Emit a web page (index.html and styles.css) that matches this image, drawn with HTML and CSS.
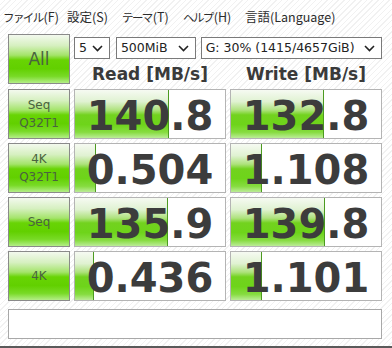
FILE: index.html
```html
<!DOCTYPE html>
<html lang="ja">
<head>
    <meta charset="UTF-8">
    <title>CrystalDiskMark</title>
    <link rel="stylesheet" href="styles.css">
</head>
<body>
    <div class="menu">
        <span class="menu-item file"><span class="kana">ファイル</span>(F)</span>
        <span class="menu-item settings">設定(S)</span>
        <span class="menu-item theme"><span class="kana">テーマ</span>(T)</span>
        <span class="menu-item help"><span class="kana">ヘルプ</span>(H)</span>
        <span class="menu-item">言語(Language)</span>
    </div>

    <div class="board">
        <div class="btn btn-all">All</div>
        <div class="head">
            <div class="selects">
                <div class="select sel-count">5<svg class="chev" width="11" height="7" viewBox="0 0 11 7"><polyline points="1,1 5.5,5.5 10,1" fill="none" stroke="#222" stroke-width="1.6"/></svg></div>
                <div class="select sel-size">500MiB<svg class="chev" width="11" height="7" viewBox="0 0 11 7"><polyline points="1,1 5.5,5.5 10,1" fill="none" stroke="#222" stroke-width="1.6"/></svg></div>
                <div class="select sel-drive">G: 30% (1415/4657GiB)<svg class="chev" width="11" height="7" viewBox="0 0 11 7"><polyline points="1,1 5.5,5.5 10,1" fill="none" stroke="#222" stroke-width="1.6"/></svg></div>
            </div>
            <div class="titles">
                <div class="title">Read [MB/s]</div>
                <div class="title">Write [MB/s]</div>
            </div>
        </div>

        <!-- Seq Q32T1 -->
        <div class="btn">Seq<br>Q32T1</div>
        <div class="cell"><div class="bar" style="width: 94px"></div><span class="val">140.8</span></div>
        <div class="cell"><div class="bar" style="width: 93px"></div><span class="val">132.8</span></div>

        <!-- 4K Q32T1 -->
        <div class="btn">4K<br>Q32T1</div>
        <div class="cell"><div class="bar" style="width: 21px"></div><span class="val">0.504</span></div>
        <div class="cell"><div class="bar" style="width: 31px"></div><span class="val">1.108</span></div>

        <!-- Seq -->
        <div class="btn">Seq</div>
        <div class="cell"><div class="bar" style="width: 93px"></div><span class="val">135.9</span></div>
        <div class="cell"><div class="bar" style="width: 94px"></div><span class="val">139.8</span></div>

        <!-- 4K -->
        <div class="btn">4K</div>
        <div class="cell"><div class="bar" style="width: 19px"></div><span class="val">0.436</span></div>
        <div class="cell"><div class="bar" style="width: 31px"></div><span class="val">1.101</span></div>

        <div class="comment"></div>
    </div>
    <div class="frame-bottom"></div>
</body>
</html>
```

FILE: styles.css
```css
* {
    box-sizing: border-box;
    margin: 0;
    padding: 0;
}

html, body {
    width: 392px;
    height: 348px;
    overflow: hidden;
}

body {
    font-family: "DejaVu Sans", Verdana, sans-serif;
    background: repeating-linear-gradient(135deg, #ffffff 0px, #ffffff 3px, #f1f1f1 3px, #f1f1f1 4px);
    color: #333;
}

.menu {
    display: flex;
    height: 33px;
    padding: 8px 0 0 3px;
    font-family: "Noto Sans CJK JP", sans-serif;
    font-size: 12.5px;
    color: #2b2b2b;
    line-height: 17px;
    white-space: nowrap;
}

.menu-item {
    flex: none;
}

.kana {
    font-size: 11.5px;
    letter-spacing: -1.6px;
    margin-right: 1px;
}

.file {
    width: 64px;
}

.settings {
    width: 55px;
}

.theme {
    width: 61px;
}

.help {
    width: 62px;
}

.board {
    display: grid;
    grid-template-columns: 62px 152px 152px;
    grid-template-rows: 51px 50px 50px 50px 50px 30px;
    column-gap: 4px;
    row-gap: 4px;
    padding-left: 8px;
    padding-top: 1px;
}

.btn {
    border: 1px solid #8a8a8a;
    background: linear-gradient(to bottom, #f3f9ee 0%, #d6f0c0 22%, #a4e46a 42%, #68d404 52%, #62d000 70%, #78da26 86%, #b4ee88 100%);
    color: #4a6340;
    font-size: 12px;
    line-height: 18px;
    text-align: center;
    display: flex;
    align-items: center;
    justify-content: center;
}

.btn-all {
    height: 50px;
    font-size: 17px;
}

.head {
    grid-column: 2 / 4;
    padding-top: 3px;
}

.selects {
    display: flex;
    height: 22px;
}

.select {
    position: relative;
    height: 22px;
    border: 1px solid #7a7a7a;
    background: #fff;
    font-size: 12.5px;
    line-height: 20px;
    padding-left: 4px;
    color: #222;
}

.chev {
    position: absolute;
    right: 6px;
    top: 7px;
}

.sel-count {
    width: 36px;
}

.sel-size {
    width: 80px;
    margin-left: 6px;
}

.sel-drive {
    width: 182px;
    margin-left: 5px;
}

.titles {
    display: flex;
    gap: 4px;
    margin-top: 4px;
}

.title {
    width: 152px;
    text-align: center;
    font-weight: bold;
    font-size: 17px;
    line-height: 22px;
    color: #3a3a3a;
}

.cell {
    position: relative;
    border: 1px solid #b4b4b4;
    background: #fff;
    display: flex;
    align-items: center;
    justify-content: center;
    overflow: hidden;
}

.bar {
    position: absolute;
    left: 0;
    top: 0;
    bottom: 0;
    border-right: 1px solid #4c9a20;
    background: linear-gradient(to bottom, #f6faf2 0%, #e0f2d2 24%, #aee27c 42%, #72d21e 52%, #6ed41a 72%, #86dc40 88%, #bcec98 100%);
}

.val {
    position: relative;
    font-weight: bold;
    font-size: 40px;
    line-height: 40px;
    color: #3c3c3c;
    padding-top: 4px;
}

.comment {
    grid-column: 1 / 4;
    border: 1px solid #a8a8a8;
    background: #fff;
    margin-top: 4px;
    height: 30px;
}

.frame-bottom {
    position: absolute;
    left: 0;
    right: 0;
    top: 346px;
    height: 2px;
    background: #5a5a5a;
}
```
